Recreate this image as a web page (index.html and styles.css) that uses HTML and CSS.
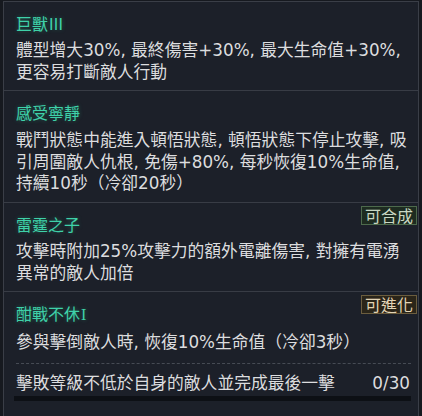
FILE: index.html
```html
<!DOCTYPE html>
<html lang="zh-Hant">
<head>
    <meta charset="UTF-8">
    <meta name="viewport" content="width=device-width, initial-scale=1.0">
    <title>天賦</title>
    <link rel="stylesheet" href="styles.css">
</head>
<body>
    <div class="panel">
        <!-- 巨獸 -->
        <div class="trait">
            <div class="trait-name">巨獸Ⅲ</div>
            <div class="trait-desc">體型增大30%, 最終傷害+30%, 最大生命值+30%, 更容易打斷敵人行動</div>
        </div>

        <!-- 感受寧靜 -->
        <div class="trait">
            <div class="trait-name">感受寧靜</div>
            <div class="trait-desc">戰鬥狀態中能進入頓悟狀態, 頓悟狀態下停止攻擊, 吸引周圍敵人仇根, 免傷+80%, 每秒恢復10%生命值, 持續10秒（冷卻20秒）</div>
        </div>

        <!-- 雷霆之子 -->
        <div class="trait">
            <span class="badge badge-merge">可合成</span>
            <div class="trait-name">雷霆之子</div>
            <div class="trait-desc">攻擊時附加25%攻擊力的額外電離傷害, 對擁有電湧異常的敵人加倍</div>
        </div>

        <!-- 酣戰不休 -->
        <div class="trait">
            <span class="badge badge-evolve">可進化</span>
            <div class="trait-name">酣戰不休<span class="numeral">I</span></div>
            <div class="trait-desc">參與擊倒敵人時, 恢復10%生命值（冷卻3秒）</div>
            <div class="quest">
                <span>擊敗等級不低於自身的敵人並完成最後一擊</span>
                <span class="quest-count">0/30</span>
            </div>
            <div class="quest-bar"><div class="quest-fill" style="width: 0%"></div></div>
        </div>
    </div>
</body>
</html>
```

FILE: styles.css
```css
body {
    margin: 0;
    padding: 0;
    background-color: #16191f;
    font-family: "DejaVu Sans", "Noto Sans CJK TC", sans-serif;
    color: #dcdddf;
}
.panel {
    margin: 1px 3px 0;
    height: 415px;
    background-color: #1c2029;
    border: 1px solid #3a3e47;
    border-bottom: none;
    overflow: hidden;
}
.trait {
    position: relative;
    padding: 11px 7px 7px 12px;
    border-bottom: 1px solid #383c45;
}
.trait:last-child {
    border-bottom: none;
}
.trait-name {
    font-family: "Noto Sans CJK TC", sans-serif;
    font-size: 16px;
    line-height: 20px;
    color: #3fd1a9;
    text-shadow: 0 0 4px rgba(40, 200, 150, 0.35);
    margin-bottom: 7px;
}
.numeral {
    font-family: "Liberation Serif", serif;
    margin-left: 1px;
}
.trait-desc {
    font-size: 16.8px;
    line-height: 21.5px;
}
.trait:nth-child(2) .trait-desc {
    padding-top: 1px;
    line-height: 21.7px;
}
.badge {
    position: absolute;
    top: 3px;
    right: 1px;
    font-family: "Noto Sans CJK TC", sans-serif;
    font-size: 16px;
    line-height: 17px;
    padding: 0 3px;
    border: 1px solid;
}
.badge-merge {
    background-color: #1d2b20;
    border-color: #4d6a4c;
    color: #c9d8c4;
}
.badge-evolve {
    background-color: #2a2519;
    border-color: #6b5d3e;
    color: #e3d5b6;
}
.quest {
    margin-top: 9px;
    padding-top: 8px;
    border-top: 1px dashed #464b54;
    display: flex;
    justify-content: space-between;
    font-size: 16.8px;
    line-height: 22px;
}
.quest-count {
    padding-right: 1px;
}
.quest-bar {
    margin-top: 2px;
    margin-left: -2px;
    height: 5px;
    background-color: #0d1015;
}
.quest-fill {
    height: 100%;
    background-color: #3fd1a9;
}
```
